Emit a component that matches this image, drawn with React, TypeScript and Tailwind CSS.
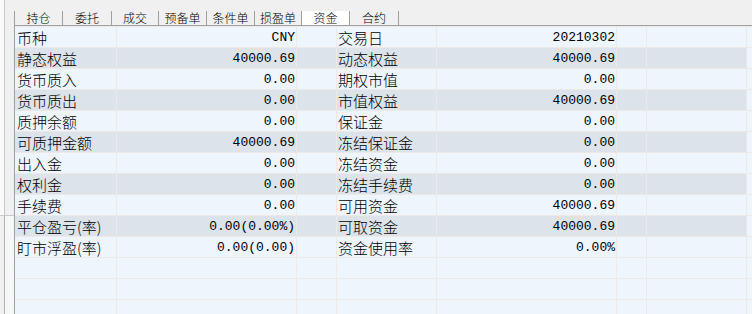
import React from "react";

const tabs = [
  { name: "持仓", w: "w-[48px]" },
  { name: "委托", w: "w-[49px]" },
  { name: "成交", w: "w-[47px]" },
  { name: "预备单", w: "w-[48px]" },
  { name: "条件单", w: "w-[48px]" },
  { name: "损盈单", w: "w-[47px]" },
  { name: "资金", w: "w-[48px]", active: true },
  { name: "合约", w: "w-[49px]" },
];

const rows: string[][] = [
  ["币种", "CNY", "交易日", "20210302"],
  ["静态权益", "40000.69", "动态权益", "40000.69"],
  ["货币质入", "0.00", "期权市值", "0.00"],
  ["货币质出", "0.00", "市值权益", "40000.69"],
  ["质押余额", "0.00", "保证金", "0.00"],
  ["可质押金额", "40000.69", "冻结保证金", "0.00"],
  ["出入金", "0.00", "冻结资金", "0.00"],
  ["权利金", "0.00", "冻结手续费", "0.00"],
  ["手续费", "0.00", "可用资金", "40000.69"],
  ["平仓盈亏(率)", "0.00(0.00%)", "可取资金", "40000.69"],
  ["盯市浮盈(率)", "0.00(0.00)", "资金使用率", "0.00%"],
  ["", "", "", ""],
  ["", "", "", ""],
  ["", "", "", ""],
];

const cjk = "font-['Noto_Sans_CJK_SC',sans-serif] font-light text-[15px] leading-none";
const num = "font-['Liberation_Mono',monospace] text-[13px] leading-none";

function Row({ cells, dark }: { cells: string[]; dark: boolean }) {
  const bg = dark ? "bg-[#dce3eb]" : "bg-[#eff5fd]";
  const cell = "h-full flex items-center border-r border-[#ece9e6]";
  return (
    <div className={`flex h-[21px] shrink-0 border-t border-[#ece9e6] ${bg}`}>
      <div className={`${cell} w-[102px] pl-[2px] ${cjk}`}>{cells[0]}</div>
      <div className={`${cell} w-[180px] justify-end pr-[1px] ${num}`}>{cells[1]}</div>
      <div className={`${cell} w-[40px]`} />
      <div className={`${cell} w-[100px] pl-[1px] ${cjk}`}>{cells[2]}</div>
      <div className={`${cell} w-[180px] justify-end pr-[1px] ${num}`}>{cells[3]}</div>
      <div className={`${cell} w-[30px]`} />
      <div className={`${cell} w-[100px]`} />
      <div className="h-full flex-1 bg-[#eff5fd]" />
    </div>
  );
}

export default function App() {
  return (
    <div className="w-[752px] h-[314px] bg-[#f0f0f0] flex overflow-hidden text-black">
      <div className="w-[14px] flex flex-col shrink-0">
        <div className="h-[215px] flex">
          <div className="w-[5px] bg-[#f9f9f9] border-r border-[#c8c8c8]" />
        </div>
        <div className="flex-1 flex border-t border-[#c8c8c8]">
          <div className="w-[4px]" />
          <div className="flex-1 bg-[#f7f7f7] border-l border-[#b4b4b4]" />
        </div>
      </div>
      <div className="flex-1 flex flex-col">
        <div className="h-[25px] flex items-end shrink-0">
          {tabs.map((t) => (
            <div
              key={t.name}
              className={`${t.w} h-[14px] flex items-center justify-center border-l border-[#a0a0a0] font-['Noto_Sans_CJK_SC',sans-serif] font-light text-[12px] leading-none ${
                t.active ? "bg-white" : ""
              }`}
            >
              {t.name}
            </div>
          ))}
          <div className="h-[14px] border-l border-[#a0a0a0]" />
        </div>
        <div className="flex-1 flex flex-col border-t border-l border-[#a0a0a0] bg-[#eff5fd]">
          {rows.map((r, i) => (
            <Row key={i} cells={r} dark={i < 11 && i % 2 === 1} />
          ))}
        </div>
      </div>
    </div>
  );
}
